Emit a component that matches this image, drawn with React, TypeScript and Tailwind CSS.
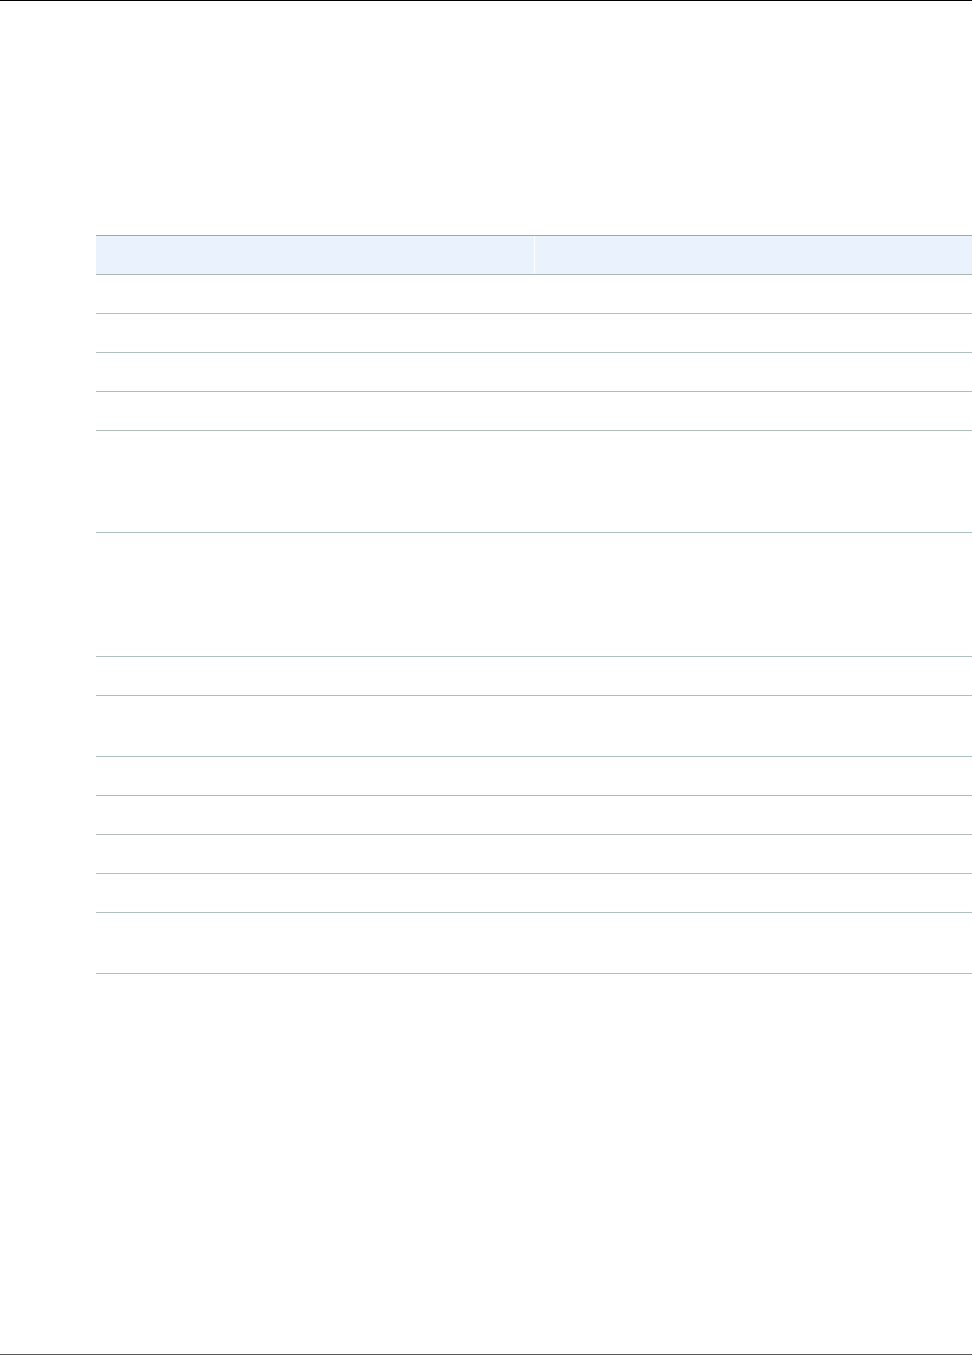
import React from "react";

const rows = [38, 38, 38, 38, 101, 123, 38, 60, 38, 38, 38, 38, 60];

export default function App() {
  return (
    <div className="h-[1355px] w-full bg-white border-t border-t-black border-b border-b-[#5b5b5b] font-['Liberation_Sans',sans-serif] flex flex-col">
      <div className="mt-[234px] ml-[96px]">
        <div className="grid grid-cols-[439px_1fr] border-t border-[#9eabab] border-b border-b-[#a6b6b4] bg-[#eaf2fd] h-[40px]">
          <div className="border-r border-white"></div>
          <div></div>
        </div>
        {rows.map((h, i) => (
          <div
            key={i}
            className="grid grid-cols-[439px_1fr] border-b border-[#afc0be]"
            style={{ height: h + 1 }}
          >
            <div></div>
            <div></div>
          </div>
        ))}
      </div>
    </div>
  );
}
